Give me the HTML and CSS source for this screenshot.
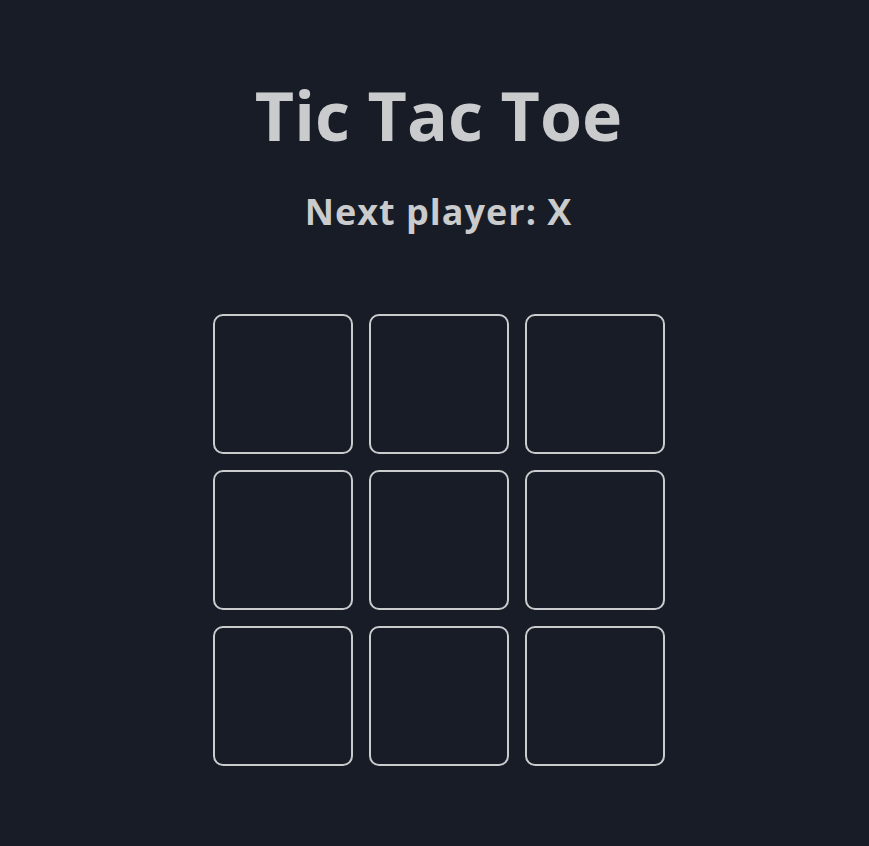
FILE: index.html
```html
<!DOCTYPE html>
<html>
<head>
<meta charset="utf-8">
<link rel="stylesheet" href="styles.css">
</head>
<body>
<main class="game">
  <h1 class="title">Tic Tac Toe</h1>
  <h2 class="status">Next player: X</h2>
  <div class="board">
    <button class="cell"></button>
    <button class="cell"></button>
    <button class="cell"></button>
    <button class="cell"></button>
    <button class="cell"></button>
    <button class="cell"></button>
    <button class="cell"></button>
    <button class="cell"></button>
    <button class="cell"></button>
  </div>
</main>
</body>
</html>
```
FILE: styles.css
```css
html, body {
  margin: 0;
  padding: 0;
  background: #181c26;
}
body {
  font-family: "Open Sans", "Noto Sans", sans-serif;
  color: #c9cbcc;
}
.game {
  display: flex;
  flex-direction: column;
  align-items: center;
  padding-left: 8px;
  padding-top: 70px;
}
.title {
  margin: 0;
  font-size: 68px;
  font-weight: 700;
  line-height: 90px;
}
.status {
  margin: 0;
  margin-top: 30px;
  font-size: 36px;
  font-weight: 700;
  letter-spacing: 1px;
  line-height: 44px;
}
.board {
  margin-top: 80px;
  display: grid;
  grid-template-columns: repeat(3, 140px);
  grid-auto-rows: 140px;
  gap: 16px;
}
.cell {
  box-sizing: border-box;
  width: 140px;
  height: 140px;
  border: 2px solid #c9cbcc;
  border-radius: 10px;
  background: transparent;
  padding: 0;
}
```
